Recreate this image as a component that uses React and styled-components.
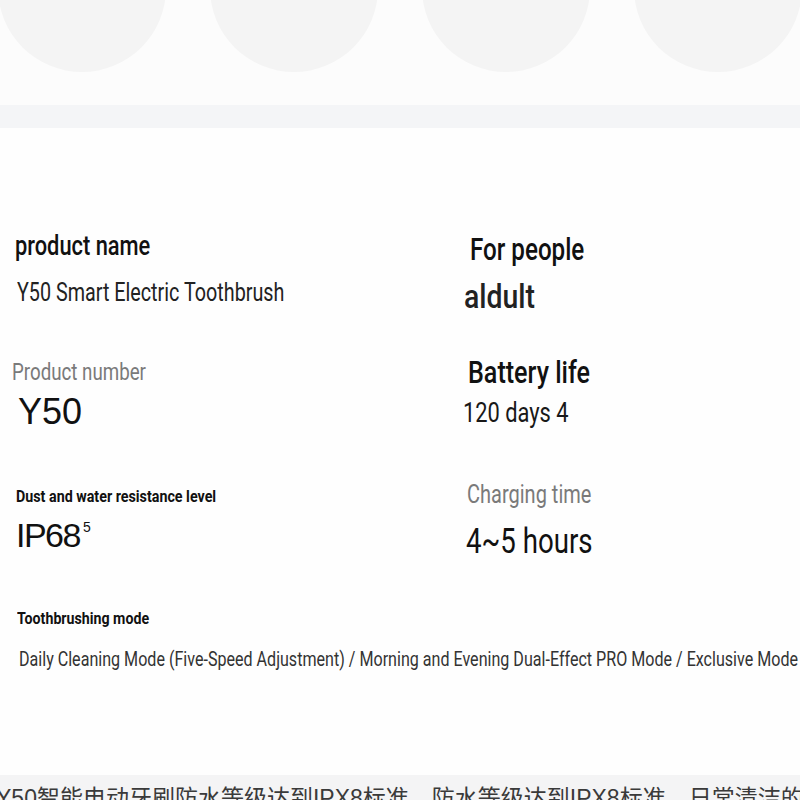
import React from "react";
import styled, { createGlobalStyle } from "styled-components";

const Global = createGlobalStyle`
  html, body { margin: 0; padding: 0; background: #ffffff; }
  body { width: 800px; height: 800px; overflow: hidden; }
`;

const COND = `Roboto, "DejaVu Sans Condensed", sans-serif`;
const ARIAL = `"Liberation Sans", Arial, sans-serif`;

const Page = styled.div`
  width: 800px;
  height: 800px;
  overflow: hidden;
  display: flex;
  flex-direction: column;
  background: #fefefe;
`;

const TopBand = styled.div`
  height: 105px;
  flex: none;
  background: #fcfcfc;
  display: flex;
  gap: 44px;
  margin-left: -2px;
  overflow: hidden;
`;

const Circle = styled.div`
  flex: none;
  width: 168px;
  height: 168px;
  margin-top: -96px;
  border-radius: 50%;
  background: #f4f4f4;
`;

const Stripe = styled.div`
  height: 23px;
  flex: none;
  background: #f4f5f7;
`;

const SpecSection = styled.section`
  height: 647px;
  flex: none;
  box-sizing: border-box;
  padding-top: 97px;
  background: #fefefe;
  display: grid;
  grid-template-columns: 450px 350px;
  grid-auto-rows: 125px;
  align-content: start;
`;

const Cell = styled.div`
  display: flex;
  flex-direction: column;
  align-items: flex-start;
  grid-column: ${(p) => (p.$wide ? "1 / -1" : "auto")};
  min-width: 0;
  white-space: nowrap;
`;

const Text = styled.div`
  font-family: ${(p) => (p.$plain ? ARIAL : COND)};
  font-size: ${(p) => p.$size}px;
  font-weight: ${(p) => p.$weight || 400};
  color: ${(p) => p.$color || "#111111"};
  letter-spacing: ${(p) => p.$track || 0}px;
  line-height: 1;
  margin-top: ${(p) => p.$top}px;
  margin-left: ${(p) => p.$x}px;
  transform: scaleX(${(p) => (p.$plain ? 1 : p.$scale || 0.78)});
  transform-origin: left center;
`;

const Sup = styled.sup`
  font-size: 14px;
  letter-spacing: 0;
  vertical-align: top;
  position: relative;
  top: 2px;
  margin-left: 3px;
`;

const BottomBand = styled.div`
  flex: 1;
  background: #f4f4f5;
  padding-top: 12px;
  margin-left: -4px;
  font-family: "Liberation Sans", "Noto Sans CJK SC", sans-serif;
  font-size: 23px;
  line-height: 1;
  color: #3a3a3a;
  white-space: nowrap;
  overflow: hidden;
`;

const specs = [
  {
    label: { text: "product name", size: 28, top: 7, x: 15, weight: 500 },
    value: { text: "Y50 Smart Electric Toothbrush", size: 25, top: 20, x: 17, color: "#222", scale: 0.79 },
  },
  {
    label: { text: "For people", size: 31, top: 9, x: 20, weight: 500 },
    value: { text: "aldult", size: 33, top: 15, x: 14, weight: 500, scale: 0.86, color: "#222" },
  },
  {
    label: { text: "Product number", size: 24, top: 10, x: 12, color: "#7a7a7a" },
    value: { text: "Y50", size: 36, top: 10, x: 18, plain: true },
  },
  {
    label: { text: "Battery life", size: 31, top: 7, x: 18, weight: 500, scale: 0.81 },
    value: { text: "120 days 4", size: 28, top: 11, x: 13, color: "#181818" },
  },
  {
    label: { text: "Dust and water resistance level", size: 17, top: 13, x: 16, weight: 700, scale: 0.84 },
    value: { text: "IP68", sup: "5", size: 34, top: 13, x: 16, plain: true, track: -1.5 },
  },
  {
    label: { text: "Charging time", size: 25, top: 7, x: 17, color: "#7a7a7a", scale: 0.8 },
    value: { text: "4~5 hours", size: 35, top: 17, x: 16, scale: 0.79 },
  },
  {
    wide: true,
    label: { text: "Toothbrushing mode", size: 17, top: 10, x: 17, weight: 700, scale: 0.835 },
    value: {
      text: "Daily Cleaning Mode (Five-Speed Adjustment) / Morning and Evening Dual-Effect PRO Mode / Exclusive Mode",
      size: 21,
      top: 22,
      x: 19,
      color: "#333",
      scale: 0.766,
    },
  },
];

function Field({ d }) {
  return (
    <Text
      $size={d.size}
      $top={d.top}
      $x={d.x}
      $weight={d.weight}
      $color={d.color}
      $scale={d.scale}
      $plain={d.plain}
      $track={d.track}
    >
      {d.text}
      {d.sup && <Sup>{d.sup}</Sup>}
    </Text>
  );
}

export default function App() {
  return (
    <>
      <Global />
      <Page>
        <TopBand>
          <Circle />
          <Circle />
          <Circle />
          <Circle />
        </TopBand>
        <Stripe />
        <SpecSection>
          {specs.map((s, i) => (
            <Cell key={i} $wide={s.wide}>
              <Field d={s.label} />
              <Field d={s.value} />
            </Cell>
          ))}
        </SpecSection>
        <BottomBand>Y50智能电动牙刷防水等级达到IPX8标准，防水等级达到IPX8标准，日常清洁的水头当浸泡湿</BottomBand>
      </Page>
    </>
  );
}
